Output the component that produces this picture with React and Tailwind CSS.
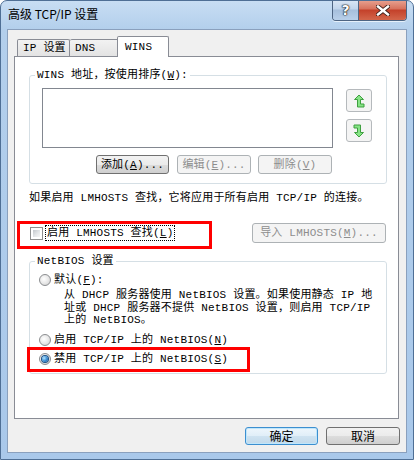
import React from "react";

const txt =
  "font-['Liberation_Mono','Noto_Sans_CJK_SC',monospace] text-[11px] tracking-[0.2px] leading-[12px] text-black";

function U({ children }) {
  return <span className="underline underline-offset-[1px]">{children}</span>;
}

function Btn({ className = "", disabled, children }) {
  return (
    <div
      className={
        "flex items-center justify-center rounded-[3px] border whitespace-nowrap " +
        (disabled
          ? "border-[#adb2b5] bg-[#f4f4f4] text-[#8d8d8d] "
          : "border-[#707070] bg-[linear-gradient(180deg,#f2f2f2_0%,#ebebeb_50%,#dddddd_50%,#cfcfcf_100%)] text-black ") +
        className
      }
    >
      {children}
    </div>
  );
}

function ArrowBtn({ down }) {
  return (
    <div className="w-[26px] h-[23px] rounded-[3px] border border-[#b5b9bc] bg-[#f4f4f4] flex items-center justify-center">
      <svg width="12" height="14" viewBox="0 0 12 14">
        {down ? (
          <polygon
            points="1,1 7.5,1 7.5,8.5 10.5,8.5 6,13 1.5,8.5 4.5,8.5 4.5,4 1,4"
            fill="#86e486"
            stroke="#3f9f3f"
            strokeWidth="1"
            strokeLinejoin="miter"
          />
        ) : (
          <polygon
            points="6,1 10.5,5.5 7.5,5.5 7.5,10 11,10 11,13 4.5,13 4.5,5.5 1.5,5.5"
            fill="#86e486"
            stroke="#3f9f3f"
            strokeWidth="1"
            strokeLinejoin="miter"
          />
        )}
      </svg>
    </div>
  );
}

function Radio({ checked }) {
  return (
    <span className="w-[12px] h-[12px] shrink-0 rounded-full border border-[#8b8d90] bg-[radial-gradient(circle_at_40%_40%,#ffffff_0%,#e6e6e6_55%,#c9c9c9_100%)] flex items-center justify-center">
      {checked && (
        <span className="w-[6px] h-[6px] rounded-full bg-[radial-gradient(circle_at_35%_35%,#b5e6ff_0%,#3d8fd6_50%,#164f8c_100%)] shadow-[0_0_0_1px_#1b4f84]" />
      )}
    </span>
  );
}

export default function App() {
  return (
    <div className="relative w-[414px] h-[460px] flex flex-col rounded-t-[7px] border border-[#4f6f95] bg-[linear-gradient(180deg,#c8ddf3_0%,#b3cfec_28px,#a9c8ea_100%)] overflow-hidden">
      {/* Title bar */}
      <div className="h-[28px] flex justify-between items-start shrink-0">
        <div className="pl-[7px] pt-[5px] text-[12px] leading-[16px] text-black font-['Noto_Sans_CJK_SC','Noto_Sans',sans-serif]">
          高级 TCP/IP 设置
        </div>
        <div className="flex -mt-px mr-[6px] rounded-b-[4px] border border-t-0 border-[#4e6583] overflow-hidden shadow-[0_1px_0_#e6f0fa]">
          <div className="w-[26px] h-[20px] flex items-center justify-center border-r border-[#4e6583] bg-[linear-gradient(180deg,#dbe7f5_0%,#c1d5ec_45%,#a6bfdc_50%,#b9d0ea_100%)]">
            <span className="text-white font-bold text-[14px] leading-[14px] font-['DejaVu_Sans',sans-serif] [text-shadow:0_0_1px_#000,0_0_1px_#000,0_0_2px_#333]">
              ?
            </span>
          </div>
          <div className="w-[47px] h-[20px] flex items-center justify-center bg-[linear-gradient(180deg,#e8a493_0%,#d7715c_45%,#c4412a_50%,#d3664b_100%)]">
            <svg width="14" height="11" viewBox="0 0 14 11">
              <path d="M2 1.5 L12 9.5 M12 1.5 L2 9.5" stroke="#3b1f1a" strokeWidth="4.2" strokeLinecap="square" />
              <path d="M2 1.5 L12 9.5 M12 1.5 L2 9.5" stroke="#ffffff" strokeWidth="2.4" strokeLinecap="square" />
            </svg>
          </div>
        </div>
      </div>

      {/* Client area */}
      <div className="ml-[6px] w-[400px] h-[424px] border border-[#8aa0bd] bg-[#f0f0f0] flex flex-col shrink-0">
        {/* Tabs */}
        <div className={"mt-[6px] ml-[9px] h-[21px] flex items-end relative z-10 -mb-px " + txt}>
          <div className="w-[53px] h-[17px] mb-px pl-[5px] pt-[2px] border border-b-0 border-[#898c95] bg-[linear-gradient(180deg,#f2f2f2,#e3e3e3)] rounded-t-[2px] whitespace-nowrap">
            IP 设置
          </div>
          <div className="w-[49px] h-[17px] mb-px pl-[5px] pt-[2px] border border-b-0 border-l-0 border-[#898c95] bg-[linear-gradient(180deg,#f2f2f2,#e3e3e3)] rounded-t-[2px] whitespace-nowrap">
            DNS
          </div>
          <div className="-ml-[2px] w-[52px] h-[21px] pl-[7px] pt-[4px] border border-b-0 border-[#898c95] bg-white rounded-t-[2px] whitespace-nowrap">
            WINS
          </div>
        </div>

        {/* Panel */}
        <div className={"ml-[6px] w-[385px] h-[363px] border border-[#898c95] bg-white pl-[14px] pr-[11px] pt-[12px] flex flex-col " + txt}>
          {/* WINS group */}
          <fieldset className="min-w-0 border border-[#d5dfe5] rounded-[3px] pb-[9px]">
            <legend className="ml-[5px] px-[2px] leading-[12px] whitespace-nowrap">
              WINS 地址，按使用排序(<U>W</U>):
            </legend>
            <div className="flex mt-[7px] ml-[12px]">
              <div className="w-[291px] h-[60px] border border-[#828790] bg-white" />
              <div className="ml-[13px] mt-[1px] flex flex-col gap-[7px]">
                <ArrowBtn />
                <ArrowBtn down />
              </div>
            </div>
            <div className="flex mt-[7px] ml-[66px] h-[19px]">
              <Btn className="w-[73px] h-[19px]">
                添加(<U>A</U>)...
              </Btn>
              <Btn disabled className="ml-[8px] w-[74px] h-[19px]">
                编辑(<U>E</U>)...
              </Btn>
              <Btn disabled className="ml-[7px] w-[74px] h-[19px]">
                删除(<U>V</U>)
              </Btn>
            </div>
          </fieldset>

          <div className="mt-[8px] whitespace-nowrap">
            如果启用 LMHOSTS 查找，它将应用于所有启用 TCP/IP 的连接。
          </div>

          {/* LMHOSTS row */}
          <div className="mt-[19px] h-[20px] flex items-center justify-between">
            <div className="flex items-center ml-[1px]">
              <span className="w-[13px] h-[13px] border border-[#8f8f8f] bg-white p-[2px] flex">
                <span className="flex-1 bg-[linear-gradient(135deg,#c3c7cc_0%,#e4e6e8_55%,#f6f6f6_100%)]" />
              </span>
              <span className="ml-[2px] h-[16px] px-[1px] flex items-center border border-dotted border-black whitespace-nowrap">
                启用 LMHOSTS 查找(<U>L</U>)
              </span>
            </div>
            <Btn disabled className="w-[134px] h-[20px] mr-[1px]">
              导入 LMHOSTS(<U>M</U>)...
            </Btn>
          </div>

          {/* NetBIOS group */}
          <fieldset className="mt-[12px] min-w-0 border border-[#d5dfe5] rounded-[3px] pb-[8px]">
            <legend className="ml-[5px] px-[2px] leading-[12px] whitespace-nowrap">NetBIOS 设置</legend>
            <div className="mt-[7px] ml-[9px] flex items-center h-[12px]">
              <Radio />
              <span className="ml-[3px] whitespace-nowrap">
                默认(<U>F</U>):
              </span>
            </div>
            <div className="mt-[3px] ml-[34px] leading-[12.5px] whitespace-nowrap">
              从 DHCP 服务器使用 NetBIOS 设置。如果使用静态 IP 地
              <br />
              址或 DHCP 服务器不提供 NetBIOS 设置，则启用 TCP/IP
              <br />
              上的 NetBIOS。
            </div>
            <div className="mt-[7px] ml-[9px] flex items-center h-[12px]">
              <Radio />
              <span className="ml-[3px] whitespace-nowrap">
                启用 TCP/IP 上的 NetBIOS(<U>N</U>)
              </span>
            </div>
            <div className="mt-[7px] ml-[9px] flex items-center h-[12px]">
              <Radio checked />
              <span className="ml-[3px] whitespace-nowrap">
                禁用 TCP/IP 上的 NetBIOS(<U>S</U>)
              </span>
            </div>
          </fieldset>
        </div>

        {/* Dialog buttons */}
        <div className="mt-[8px] mr-[6px] flex justify-end gap-[8px] font-['Noto_Sans_CJK_SC','Noto_Sans',sans-serif] text-[12px] leading-[14px]">
          <div className="w-[73px] h-[18px] rounded-[3px] border border-[#3c8fd0] shadow-[inset_0_0_0_1px_#bfe6fb] bg-[linear-gradient(180deg,#eef6fc_0%,#e0eef8_50%,#cfe3f1_50%,#c2d9ea_100%)] flex items-center justify-center text-black">
            确定
          </div>
          <div className="w-[74px] h-[18px] rounded-[3px] border border-[#707070] bg-[linear-gradient(180deg,#f2f2f2_0%,#ebebeb_50%,#dddddd_50%,#cfcfcf_100%)] flex items-center justify-center text-black">
            取消
          </div>
        </div>
      </div>

      {/* Red annotation boxes */}
      <div className="absolute left-[16px] top-[220px] w-[195px] h-[28px] border-[3px] border-[#ff0000] pointer-events-none" />
      <div className="absolute left-[26px] top-[346px] w-[223px] h-[25px] border-[3px] border-[#ff0000] pointer-events-none" />
    </div>
  );
}
